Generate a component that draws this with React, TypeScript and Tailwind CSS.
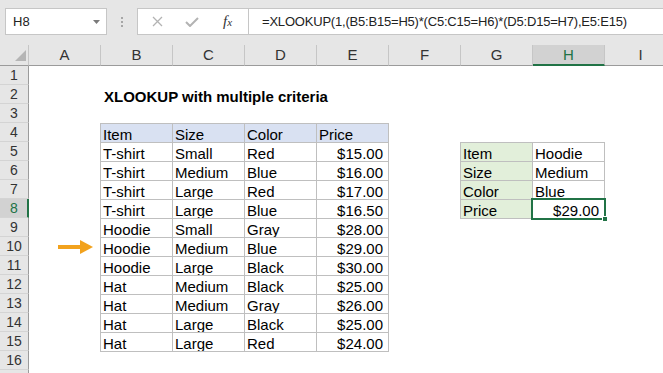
const COLUMNS = ["A", "B", "C", "D", "E", "F", "G", "H", "I"];
const ROW_NUMBERS = Array.from({ length: 16 }, (_, i) => i + 1);

const PRODUCTS = [
  ["T-shirt", "Small", "Red", "$15.00"],
  ["T-shirt", "Medium", "Blue", "$16.00"],
  ["T-shirt", "Large", "Red", "$17.00"],
  ["T-shirt", "Large", "Blue", "$16.50"],
  ["Hoodie", "Small", "Gray", "$28.00"],
  ["Hoodie", "Medium", "Blue", "$29.00"],
  ["Hoodie", "Large", "Black", "$30.00"],
  ["Hat", "Medium", "Black", "$25.00"],
  ["Hat", "Medium", "Gray", "$26.00"],
  ["Hat", "Large", "Black", "$25.00"],
  ["Hat", "Large", "Red", "$24.00"],
];

const LOOKUP = [
  ["Item", "Hoodie"],
  ["Size", "Medium"],
  ["Color", "Blue"],
];

const FORMULA = "=XLOOKUP(1,(B5:B15=H5)*(C5:C15=H6)*(D5:D15=H7),E5:E15)";

function Cell({
  children,
  right = false,
  className = "",
}: {
  children?: React.ReactNode;
  right?: boolean;
  className?: string;
}) {
  return (
    <div
      className={`flex h-[19px] items-end overflow-hidden whitespace-nowrap border-t border-r border-[#bfbfbf] leading-[15px] ${
        right ? "justify-end pr-[5px]" : "pl-[2px]"
      } ${className}`}
    >
      {children}
    </div>
  );
}

function FormulaBar() {
  return (
    <div className="flex h-[45px] items-start bg-[#e6e6e6] pt-[8px]">
      <div className="ml-[5px] flex h-[27px] w-[102px] shrink-0 items-center justify-between border border-[#c6c6c6] bg-white pl-[7px] pr-[6px] text-[13px] text-[#222]">
        <span>H8</span>
        <svg width="7" height="4" viewBox="0 0 7 4">
          <polygon points="0,0 7,0 3.5,4" fill="#7a7a7a" />
        </svg>
      </div>
      <div className="flex h-[27px] w-[30px] shrink-0 flex-col items-center justify-center gap-[2px]">
        <span className="h-[2px] w-[2px] bg-[#a6a6a6]" />
        <span className="h-[2px] w-[2px] bg-[#a6a6a6]" />
        <span className="h-[2px] w-[2px] bg-[#a6a6a6]" />
      </div>
      <div className="flex h-[27px] w-[112px] shrink-0 items-center border border-[#c6c6c6] bg-white">
        <svg className="ml-[14px]" width="11" height="11" viewBox="0 0 11 11">
          <path d="M1 1 L10 10 M10 1 L1 10" stroke="#b3b3b3" strokeWidth="1.3" />
        </svg>
        <svg className="ml-[22px]" width="14" height="10" viewBox="0 0 14 10">
          <path d="M1 5 L5 9 L13 1" stroke="#b3b3b3" strokeWidth="2" fill="none" />
        </svg>
        <span className="ml-[24px] font-['Liberation_Serif',serif] text-[15px] italic text-[#333]">
          f<span className="text-[11px]">x</span>
        </span>
      </div>
      <div className="-ml-px flex h-[27px] w-[430px] shrink-0 items-center border border-[#c6c6c6] bg-white pl-[13px] text-[13px] tracking-[-0.2px] text-[#222]">
        {FORMULA}
      </div>
    </div>
  );
}

function ColumnHeaders() {
  return (
    <div className="flex h-[21px] bg-[#e6e6e6]">
      <div className="flex h-[21px] w-[29px] shrink-0 items-end justify-end border-r border-b border-r-[#c6c6c6] border-b-[#9b9b9b] pb-[4px] pr-[2px]">
        <svg width="11" height="11" viewBox="0 0 11 11">
          <polygon points="11,0 11,11 0,11" fill="#b5b5b5" />
        </svg>
      </div>
      {COLUMNS.map((col) =>
        col === "H" ? (
          <div
            key={col}
            className="flex h-[21px] w-[72px] shrink-0 items-center justify-center border-r border-b-2 border-r-[#c6c6c6] border-b-[#217346] bg-[#d2d2d2] pt-[1px] text-[15px] text-[#217346]"
          >
            {col}
          </div>
        ) : (
          <div
            key={col}
            className="flex h-[21px] w-[72px] shrink-0 items-center justify-center border-r border-b border-r-[#c6c6c6] border-b-[#9b9b9b] text-[15px] text-[#333]"
          >
            {col}
          </div>
        )
      )}
    </div>
  );
}

function RowHeaders() {
  return (
    <div className="flex w-[29px] shrink-0 flex-col">
      {ROW_NUMBERS.map((n) =>
        n === 8 ? (
          <div
            key={n}
            className="flex h-[19px] shrink-0 items-center justify-center border-r-2 border-b border-r-[#217346] border-b-[#d4d4d4] bg-[#d2d2d2] pl-[1px] text-[14px] text-[#217346]"
          >
            {n}
          </div>
        ) : (
          <div
            key={n}
            className="flex h-[19px] shrink-0 items-center justify-center border-r border-b border-r-[#9b9b9b] border-b-[#d4d4d4] bg-[#e6e6e6] text-[14px] text-[#333]"
          >
            {n}
          </div>
        )
      )}
      {/* row 17 is cut off by the window edge */}
      <div className="h-[19px] shrink-0 border-r border-r-[#9b9b9b] bg-[#e6e6e6]" />
    </div>
  );
}

export default function App() {
  return (
    <div className="h-[373px] w-[663px] overflow-hidden bg-white font-['Liberation_Sans',Arial,sans-serif] text-black">
      <FormulaBar />
      <ColumnHeaders />
      <div className="flex">
        <RowHeaders />
        <div className="grid shrink-0 grid-cols-[repeat(9,72px)] grid-rows-[repeat(17,19px)] text-[15px]">
          <div className="col-start-2 row-start-2 flex items-end whitespace-nowrap pl-[3px] font-bold leading-[15px]">
            XLOOKUP with multiple criteria
          </div>

          <div className="col-start-2 col-span-4 row-start-4 row-span-12 -ml-px grid h-[229px] w-[289px] grid-cols-[repeat(4,72px)] self-start justify-self-start border-l border-b border-[#bfbfbf]">
            {["Item", "Size", "Color", "Price"].map((h) => (
              <Cell key={h} className="bg-[#d9e1f2]">
                {h}
              </Cell>
            ))}
            {PRODUCTS.map((row, i) =>
              row.map((value, j) => (
                <Cell key={`${i}-${j}`} right={j === 3}>
                  {value}
                </Cell>
              ))
            )}
          </div>

          <div className="col-start-1 row-start-10 flex items-center pl-[29px]">
            <svg width="36" height="14" viewBox="0 0 36 14">
              <rect x="0" y="5" width="24" height="4" fill="#f2a21d" />
              <polygon points="22,0 35,7 22,14" fill="#f2a21d" />
            </svg>
          </div>

          <div className="col-start-7 col-span-2 row-start-5 row-span-4 -ml-px grid h-[77px] w-[145px] grid-cols-[repeat(2,72px)] self-start justify-self-start border-l border-b border-[#bfbfbf]">
            {LOOKUP.map(([label, value]) => (
              <div key={label} className="contents">
                <Cell className="bg-[#e2efda]">{label}</Cell>
                <Cell>{value}</Cell>
              </div>
            ))}
            <Cell className="bg-[#e2efda]">Price</Cell>
            <div className="relative">
              <Cell right>$29.00</Cell>
              <div className="absolute -left-[2px] -top-px -right-[1px] -bottom-[2px] border-2 border-[#217346]" />
              <div className="absolute -right-[3px] -bottom-[4px] h-[6px] w-[6px] border border-white bg-[#217346]" />
            </div>
          </div>
        </div>
      </div>
    </div>
  );
}
